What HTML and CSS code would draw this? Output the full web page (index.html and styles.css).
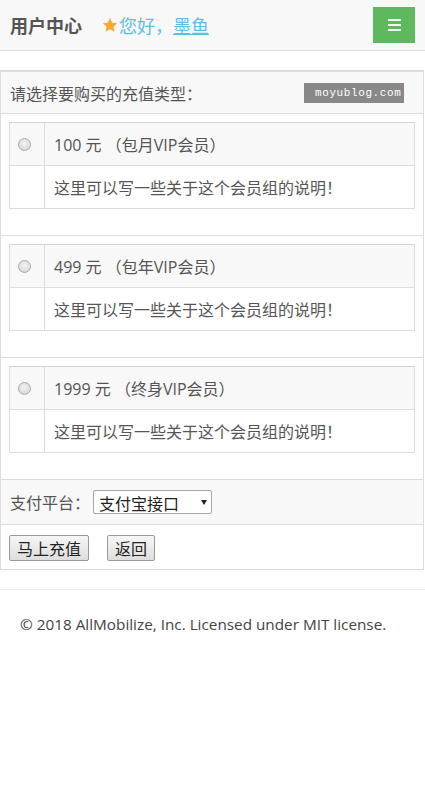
FILE: index.html
```html
<!DOCTYPE html>
<html lang="zh-CN">
<head>
    <meta charset="UTF-8">
    <meta name="viewport" content="width=device-width, initial-scale=1.0">
    <title>用户中心</title>
    <link rel="stylesheet" href="styles.css">
</head>
<body>

    <!-- 顶部导航 -->
    <header class="topbar">
        <h1 class="brand">用户中心</h1>
        <div class="welcome">
            <svg class="star" width="16" height="16" viewBox="0 0 24 24"><path d="M12 1.5l3.3 7 7.5.9-5.6 5.1 1.5 7.5L12 18.2 5.3 22l1.5-7.5L1.2 9.4l7.5-.9z"/></svg>
            <span>您好，</span><a href="#" class="user">墨鱼</a>
        </div>
        <button class="menu-btn" type="button" aria-label="menu">
            <span></span><span></span><span></span>
        </button>
    </header>

    <form class="panel">
        <div class="panel-head">
            <span>请选择要购买的充值类型：</span>
            <span class="badge">moyublog.com</span>
        </div>

        <div class="plan">
            <table class="plan-table">
                <tr class="plan-title">
                    <td class="pick"><input type="radio" name="plan" value="1"></td>
                    <td>100 元 （包月VIP会员）</td>
                </tr>
                <tr>
                    <td class="pick"></td>
                    <td>这里可以写一些关于这个会员组的说明！</td>
                </tr>
            </table>
        </div>

        <div class="plan">
            <table class="plan-table">
                <tr class="plan-title">
                    <td class="pick"><input type="radio" name="plan" value="2"></td>
                    <td>499 元 （包年VIP会员）</td>
                </tr>
                <tr>
                    <td class="pick"></td>
                    <td>这里可以写一些关于这个会员组的说明！</td>
                </tr>
            </table>
        </div>

        <div class="plan">
            <table class="plan-table">
                <tr class="plan-title">
                    <td class="pick"><input type="radio" name="plan" value="3"></td>
                    <td>1999 元 （终身VIP会员）</td>
                </tr>
                <tr>
                    <td class="pick"></td>
                    <td>这里可以写一些关于这个会员组的说明！</td>
                </tr>
            </table>
        </div>

        <!-- 支付方式 -->
        <div class="pay-row">
            <label for="pay">支付平台：</label>
            <div class="select-wrap">
                <select id="pay">
                    <option>支付宝接口</option>
                </select>
            </div>
        </div>

        <div class="actions">
            <button type="button" class="btn">马上充值</button>
            <button type="button" class="btn">返回</button>
        </div>
    </form>

    <footer class="footer">
        <p>© 2018 AllMobilize, Inc. Licensed under MIT license.</p>
    </footer>

</body>
</html>
```

FILE: styles.css
```css
body {
    margin: 0;
    padding: 0;
    font-family: "Open Sans", "Noto Sans CJK SC", sans-serif;
    font-size: 16px;
    color: #555;
    background: #fff;
}

/* 顶部导航 */
.topbar {
    display: flex;
    align-items: center;
    height: 50px;
    padding: 0 10px;
    background: #f8f8f8;
    border-bottom: 1px solid #ddd;
}

.brand {
    margin: 0;
    font-size: 18px;
    font-weight: bold;
    color: #555;
}

.welcome {
    display: flex;
    align-items: center;
    margin-left: 20px;
    font-size: 18px;
    color: #5bc0e8;
}

.star {
    fill: #f5a833;
    margin-right: 1px;
}

.user {
    color: #5bc0e8;
    text-decoration: underline;
}

.menu-btn {
    display: flex;
    flex-direction: column;
    justify-content: center;
    align-items: center;
    gap: 3px;
    width: 42px;
    height: 36px;
    margin-left: auto;
    padding: 0;
    background: #5eb95e;
    border: none;
    cursor: pointer;
}

.menu-btn span {
    display: block;
    width: 13px;
    height: 2px;
    background: #f0f8ef;
}

/* 面板 */
.panel {
    margin: 19px 1px 0 0;
    border: 1px solid #ddd;
    border-top-width: 2px;
}

.panel-head {
    display: flex;
    justify-content: space-between;
    align-items: center;
    height: 41px;
    padding: 0 19px 0 9px;
    background: #f8f8f8;
    border-bottom: 1px solid #ddd;
}

.badge {
    width: 100px;
    height: 20px;
    line-height: 20px;
    padding-left: 11px;
    box-sizing: border-box;
    background: #888;
    color: #fff;
    font-family: "Liberation Mono", monospace;
    font-size: 11px;
    letter-spacing: 0.6px;
    text-align: left;
    white-space: nowrap;
}

.plan {
    padding: 8px 8px 26px;
    border-bottom: 1px solid #ddd;
}

.plan-table {
    width: 100%;
    border-collapse: collapse;
    border: 1px solid #ddd;
}

.plan-table td {
    height: 42px;
    padding: 0 9px;
    border: 1px solid #ddd;
}

.plan-title td {
    background: #f8f8f8;
    border-top-color: #d4d4d4;
}

.plan-table .pick {
    width: 35px;
    padding: 0;
    text-align: center;
    box-sizing: border-box;
}

.pick input {
    appearance: none;
    width: 13px;
    height: 13px;
    margin: 0 0 2px -5px;
    vertical-align: middle;
    border: 1px solid #aaa;
    border-radius: 50%;
    background: radial-gradient(circle at 50% 40%, #f2f2f2, #d3d3d3);
}

/* 支付方式 */
.pay-row {
    display: flex;
    align-items: center;
    height: 44px;
    padding: 0 9px;
    background: #f8f8f8;
    border-bottom: 1px solid #ddd;
}

.pay-row label {
    margin-right: 3px;
}

.select-wrap {
    position: relative;
}

.select-wrap::after {
    content: "";
    position: absolute;
    right: 5px;
    top: 10px;
    border-left: 3px solid transparent;
    border-right: 3px solid transparent;
    border-top: 5px solid #222;
}

select {
    appearance: none;
    width: 119px;
    height: 24px;
    padding: 0 0 0 5px;
    font-family: "Noto Sans CJK SC", sans-serif;
    font-size: 16px;
    color: #222;
    background: #fff;
    border: 1px solid #a6a6a6;
    border-radius: 2px;
}

.actions {
    display: flex;
    gap: 18px;
    padding: 10px 8px 8px;
}

.btn {
    height: 26px;
    padding: 0 7px;
    font-family: "Noto Sans CJK SC", sans-serif;
    font-size: 16px;
    color: #222;
    background: linear-gradient(#f6f6f6, #dedede);
    border: 1px solid #999;
    border-radius: 2px;
}

/* フッター */
.footer {
    margin-top: 19px;
    border-top: 1px solid #eee;
    padding: 24px 20px;
    color: #444;
    font-size: 15.3px;
}

.footer p {
    margin: 0;
}
```
